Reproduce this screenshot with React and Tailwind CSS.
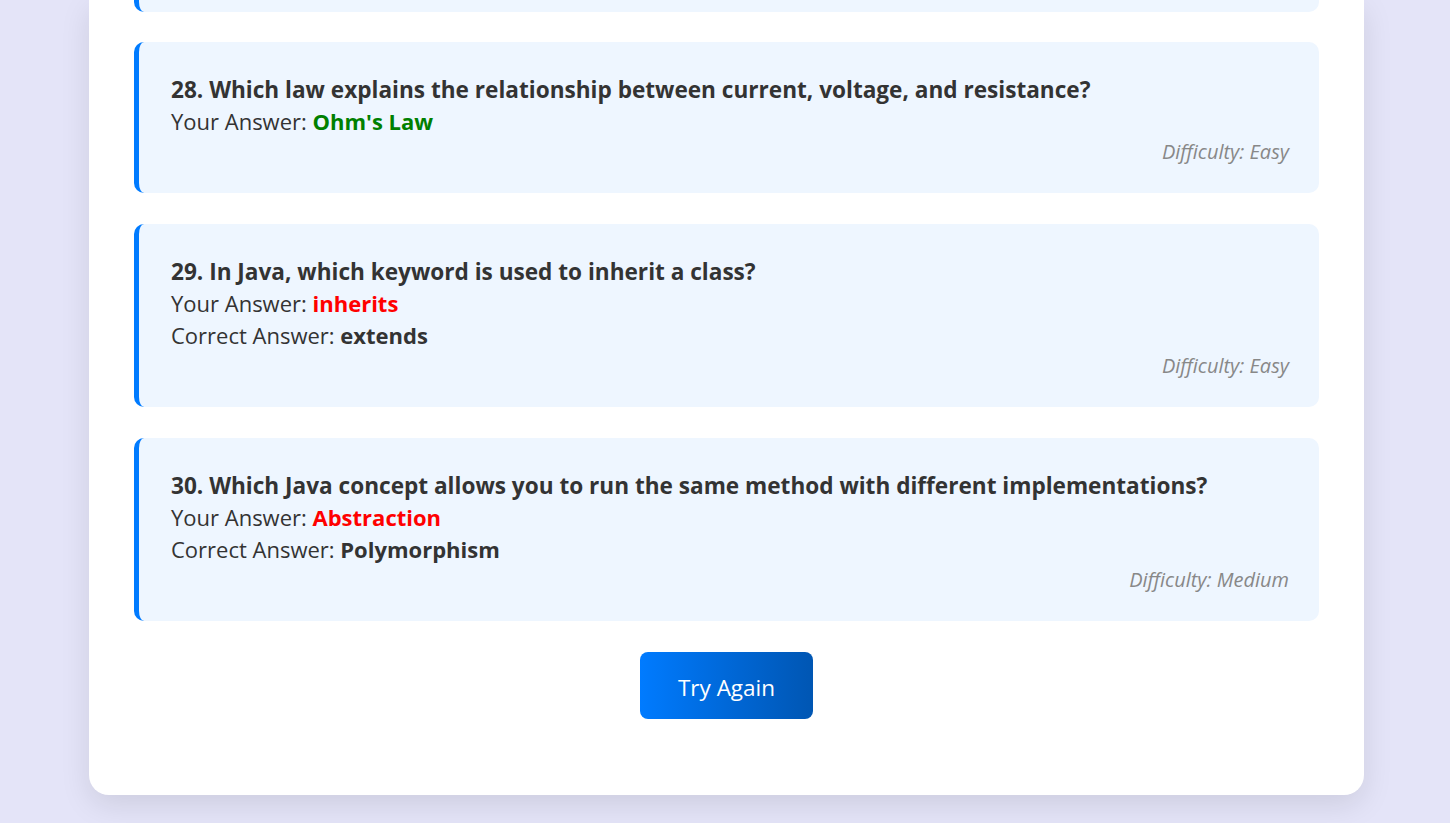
import React from 'react';

const results = [
  {
    n: 28,
    q: 'Which law explains the relationship between current, voltage, and resistance?',
    yours: "Ohm's Law",
    correct: "Ohm's Law",
    difficulty: 'Easy',
  },
  {
    n: 29,
    q: 'In Java, which keyword is used to inherit a class?',
    yours: 'inherits',
    correct: 'extends',
    difficulty: 'Easy',
  },
  {
    n: 30,
    q: 'Which Java concept allows you to run the same method with different implementations?',
    yours: 'Abstraction',
    correct: 'Polymorphism',
    difficulty: 'Medium',
  },
];

function ResultItem({ r }) {
  const ok = r.yours === r.correct;
  return (
    <div className="bg-[#eef6ff] border-l-[5px] border-[#007bff] rounded-[10px] pt-[32px] pb-[27px] pl-[32px] pr-[30px] text-[#333]">
      <p className="text-[22.6px] leading-[32px] font-bold mb-[-1px]">{r.n}. {r.q}</p>
      <p className="text-[22px] leading-[32px]">
        Your Answer:{' '}
        <span className={'font-bold ' + (ok ? 'text-[#008000]' : 'text-[#ff0000]')}>{r.yours}</span>
      </p>
      {!ok && (
        <p className="text-[22px] leading-[32px]">
          Correct Answer: <span className="font-bold">{r.correct}</span>
        </p>
      )}
      <p className="mt-[1px] text-right italic text-[20px] leading-[28px] text-[#888]">Difficulty: {r.difficulty}</p>
    </div>
  );
}

export default function App() {
  return (
    <div className="h-screen overflow-hidden bg-[#e4e4f8] flex flex-col justify-end font-['Open_Sans','Noto_Sans',sans-serif]">
      <div className="w-[1275px] ml-[89px] mb-[28px] bg-white rounded-b-[20px] shadow-[0_10px_30px_rgba(0,0,0,0.1)] px-[45px] pb-[76px]">
        {/* tail of the previous result, scrolled mostly out of view */}
        <div className="h-[12px] bg-[#eef6ff] border-l-[5px] border-[#007bff] rounded-b-[10px] mb-[30px]" />
        <div className="flex flex-col gap-[31px]">
          {results.map(r => <ResultItem key={r.n} r={r} />)}
        </div>
        <div className="flex justify-center mt-[31px]">
          <button className="w-[173px] h-[67px] pt-[4px] rounded-[8px] bg-gradient-to-r from-[#007bff] to-[#0056b3] text-white text-[22.5px]">
            Try Again
          </button>
        </div>
      </div>
    </div>
  );
}
